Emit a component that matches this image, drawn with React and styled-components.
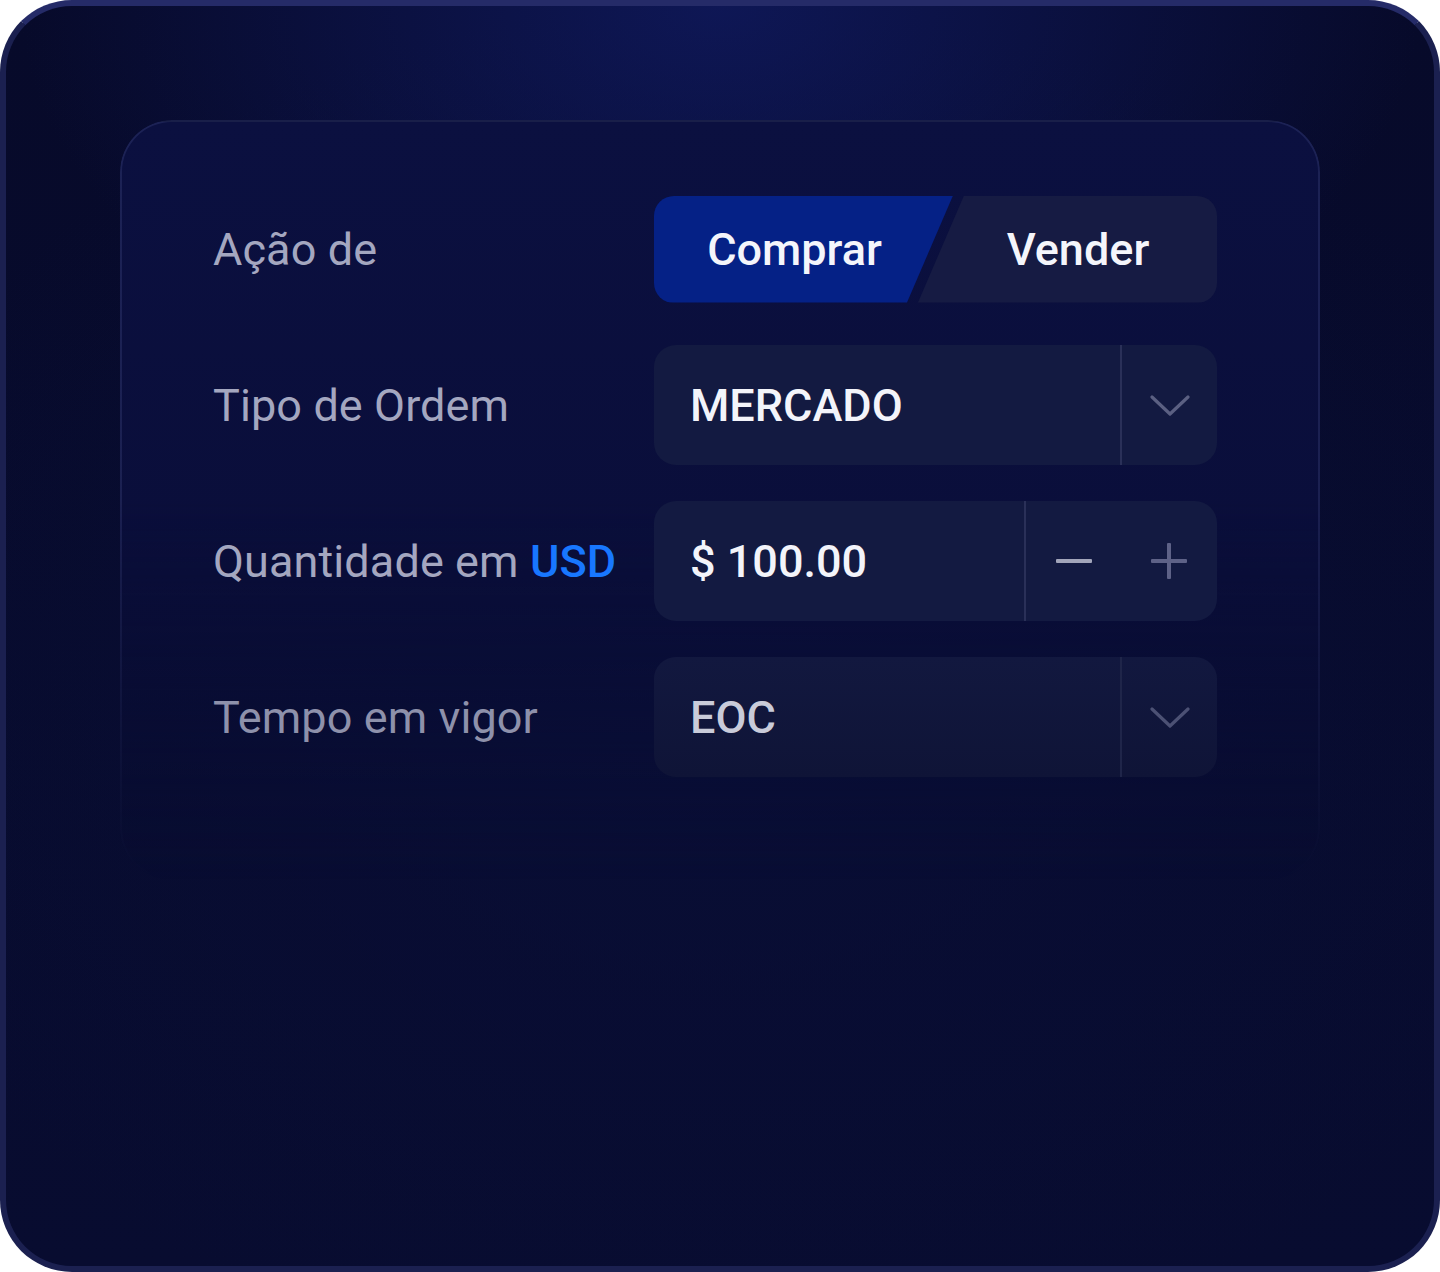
import React, { useState } from "react";
import styled, { createGlobalStyle } from "styled-components";

const GlobalStyle = createGlobalStyle`
  html, body {
    margin: 0;
    padding: 0;
    background: #ffffff;
  }
  * {
    box-sizing: border-box;
  }
`;

const StyledCard = styled.div`
  width: 1440px;
  height: 1272px;
  padding: 114px 114px 0;
  border-radius: 72px;
  border: 6px solid #1b2050;
  border-top-color: #252b68;
  background:
    radial-gradient(ellipse 700px 420px at 50% 0%, rgba(16, 26, 96, 0.8), rgba(16, 26, 96, 0) 100%),
    radial-gradient(ellipse 900px 700px at 50% 55%, #090e36, rgba(9, 14, 54, 0) 100%),
    linear-gradient(180deg, #070a2a 0%, #080c30 100%);
  font-family: Roboto, "Noto Sans", "Liberation Sans", sans-serif;
  overflow: hidden;
`;

const StyledPanel = styled.div`
  position: relative;
  height: 760px;
  padding: 69px 101px 0 93px;

  &::before {
    content: "";
    position: absolute;
    inset: 0;
    border-radius: 52px;
    border: 2px solid rgba(120, 130, 200, 0.16);
    background: linear-gradient(180deg, #0b1040 0%, #0a0e3a 60%, #080c32 100%);
    -webkit-mask-image: linear-gradient(180deg, #000 50%, transparent 100%);
    mask-image: linear-gradient(180deg, #000 50%, transparent 100%);
  }
`;

const StyledForm = styled.div`
  position: relative;
  display: flex;
  flex-direction: column;
  gap: 36px;
`;

const StyledRow = styled.div`
  display: grid;
  grid-template-columns: 441px 563px;
  align-items: center;
  height: 120px;
`;

const StyledLabel = styled.span`
  font-size: 45px;
  font-weight: 400;
  color: ${props => props.dim ? "#8e91ab" : "#a4a7c0"};
  letter-spacing: 0.1px;
`;

const StyledCurrency = styled.b`
  font-weight: 500;
  color: #1877ff;
`;

const StyledSwitch = styled.div`
  display: flex;
  height: 107px;
`;

const StyledSide = styled.button`
  flex: 0 0 299px;
  margin-left: ${props => props.first ? "0" : "-35px"};
  height: 100%;
  border: 0;
  padding: ${props => props.first ? "0 18px 0 0" : "0 0 0 21px"};
  border-radius: ${props => props.first ? "20px 0 0 20px" : "0 20px 20px 0"};
  background: ${props => props.active ? "#052186" : "#161b43"};
  clip-path: ${props => props.first
    ? "polygon(0 0, 100% 0, calc(100% - 46px) 100%, 0 100%)"
    : "polygon(46px 0, 100% 0, 100% 100%, 0 100%)"};
  color: #f4f5fb;
  font-family: inherit;
  font-size: 45px;
  font-weight: 500;
  cursor: pointer;
`;

const StyledField = styled.div`
  display: flex;
  align-items: stretch;
  height: 120px;
  border-radius: 22px;
  background: ${props => props.faded
    ? "linear-gradient(180deg, #12183f 0%, #0f1437 100%)"
    : "#131a41"};
  overflow: hidden;
`;

const StyledValue = styled.span`
  flex: 1;
  display: flex;
  align-items: center;
  padding-left: 36px;
  font-size: 45px;
  font-weight: 500;
  color: ${props => props.dim ? "#c9cbd9" : "#f3f4fa"};
  border-right: 2px solid ${props => props.dim ? "#1f2549" : "#2a3058"};
`;

const StyledIconButton = styled.button`
  flex: 0 0 ${props => props.wide ? "95px" : "95.5px"};
  display: flex;
  align-items: center;
  justify-content: center;
  border: 0;
  padding: 0;
  background: transparent;
  cursor: pointer;
`;

const Chevron = ({ color }) => (
  <svg width="40" height="24" viewBox="0 0 40 24">
    <path d="M2 4 L20 21 L38 4" fill="none" stroke={color} strokeWidth="3.2" strokeLinecap="round" strokeLinejoin="round" />
  </svg>
);

const Minus = () => (
  <svg width="38" height="38" viewBox="0 0 38 38">
    <rect x="1" y="17" width="36" height="4" rx="1" fill="#a2a5ba" />
  </svg>
);

const Plus = () => (
  <svg width="38" height="38" viewBox="0 0 38 38">
    <rect x="1" y="17" width="36" height="4" rx="1" fill="#5e6287" />
    <rect x="17" y="1" width="4" height="36" rx="1" fill="#5e6287" />
  </svg>
);

const App = () => {
  const [side, setSide] = useState("buy");
  const [amount, setAmount] = useState(100);

  return (
    <>
      <GlobalStyle />
      <StyledCard>
        <StyledPanel>
          <StyledForm>
            <StyledRow>
              <StyledLabel>Ação de</StyledLabel>
              <StyledSwitch>
                <StyledSide first active={side === "buy"} onClick={() => setSide("buy")}>
                  Comprar
                </StyledSide>
                <StyledSide active={side === "sell"} onClick={() => setSide("sell")}>
                  Vender
                </StyledSide>
              </StyledSwitch>
            </StyledRow>

            <StyledRow>
              <StyledLabel>Tipo de Ordem</StyledLabel>
              <StyledField>
                <StyledValue>MERCADO</StyledValue>
                <StyledIconButton wide>
                  <Chevron color="#5b6082" />
                </StyledIconButton>
              </StyledField>
            </StyledRow>

            <StyledRow>
              <StyledLabel>
                Quantidade em <StyledCurrency>USD</StyledCurrency>
              </StyledLabel>
              <StyledField>
                <StyledValue>$ {amount.toFixed(2)}</StyledValue>
                <StyledIconButton onClick={() => setAmount(a => Math.max(0, a - 10))}>
                  <Minus />
                </StyledIconButton>
                <StyledIconButton onClick={() => setAmount(a => a + 10)}>
                  <Plus />
                </StyledIconButton>
              </StyledField>
            </StyledRow>

            <StyledRow>
              <StyledLabel dim>Tempo em vigor</StyledLabel>
              <StyledField faded>
                <StyledValue dim>EOC</StyledValue>
                <StyledIconButton wide>
                  <Chevron color="#4c5174" />
                </StyledIconButton>
              </StyledField>
            </StyledRow>
          </StyledForm>
        </StyledPanel>
      </StyledCard>
    </>
  );
};

export default App;
